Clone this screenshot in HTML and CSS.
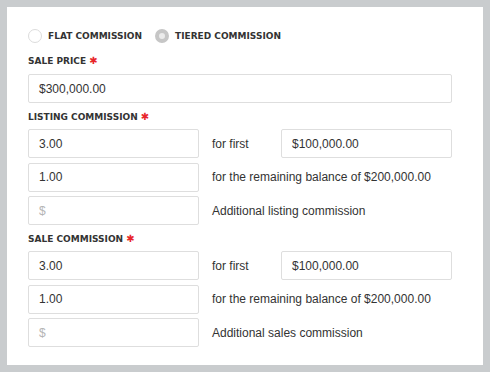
FILE: index.html
```html
<!DOCTYPE html>
<html>
<head>
<meta charset="utf-8">
<link rel="stylesheet" href="styles.css">
</head>
<body>
<div class="panel">
  <div class="radios">
    <label class="radio"><span class="dot"></span><span class="rlabel">FLAT COMMISSION</span></label>
    <label class="radio"><span class="dot checked"></span><span class="rlabel">TIERED COMMISSION</span></label>
  </div>

  <div class="label first">SALE PRICE <span class="req">&#10033;</span></div>
  <div class="field full">$300,000.00</div>

  <div class="label">LISTING COMMISSION <span class="req">&#10033;</span></div>
  <div class="rows">
    <div class="row">
      <div class="field">3.00</div>
      <div class="text short">for first</div>
      <div class="field">$100,000.00</div>
    </div>
    <div class="row">
      <div class="field">1.00</div>
      <div class="text">for the remaining balance of $200,000.00</div>
    </div>
    <div class="row">
      <div class="field placeholder">$</div>
      <div class="text">Additional listing commission</div>
    </div>
  </div>

  <div class="label">SALE COMMISSION <span class="req">&#10033;</span></div>
  <div class="rows">
    <div class="row">
      <div class="field">3.00</div>
      <div class="text short">for first</div>
      <div class="field">$100,000.00</div>
    </div>
    <div class="row">
      <div class="field">1.00</div>
      <div class="text">for the remaining balance of $200,000.00</div>
    </div>
    <div class="row">
      <div class="field placeholder">$</div>
      <div class="text">Additional sales commission</div>
    </div>
  </div>
</div>
</body>
</html>
```
FILE: styles.css
```css
html, body {
  margin: 0;
  padding: 0;
  background: #c9ccce;
}
body {
  padding: 7px;
  font-family: "Liberation Sans", Arial, sans-serif;
}
.panel {
  width: 476px;
  height: 358px;
  box-sizing: border-box;
  background: #fff;
  padding: 22px 0 0 21px;
}
.radios {
  display: flex;
  align-items: center;
  height: 14px;
}
.radio {
  display: flex;
  align-items: center;
  margin-right: 13px;
}
.dot {
  width: 14px;
  height: 14px;
  box-sizing: border-box;
  border: 1px solid #dcdcdc;
  border-radius: 50%;
  margin-right: 6px;
}
.dot.checked {
  border: 4px solid #c6c6c6;
  background: #ebebeb;
}
.rlabel, .label {
  font-family: "DejaVu Sans", sans-serif;
  font-weight: bold;
  font-size: 9px;
  color: #333;
}
.label {
  line-height: 12px;
  margin: 8px 0 6px;
}
.label.first {
  margin-top: 12px;
  margin-bottom: 7px;
}
.req {
  color: #e8262b;
  font-size: 10px;
}
.field {
  width: 171px;
  height: 29px;
  box-sizing: border-box;
  border: 1px solid #dedede;
  border-radius: 2px;
  padding-left: 10px;
  display: flex;
  align-items: center;
  font-size: 12px;
  color: #333;
}
.field.full {
  width: 424px;
}
.field.placeholder {
  color: #b5b5b5;
}
.rows {
  display: flex;
  flex-direction: column;
  gap: 4.5px;
}
.row {
  display: flex;
  align-items: center;
}
.text {
  margin-left: 13px;
  font-size: 12px;
  color: #333;
}
.text.short {
  width: 69px;
}
```
